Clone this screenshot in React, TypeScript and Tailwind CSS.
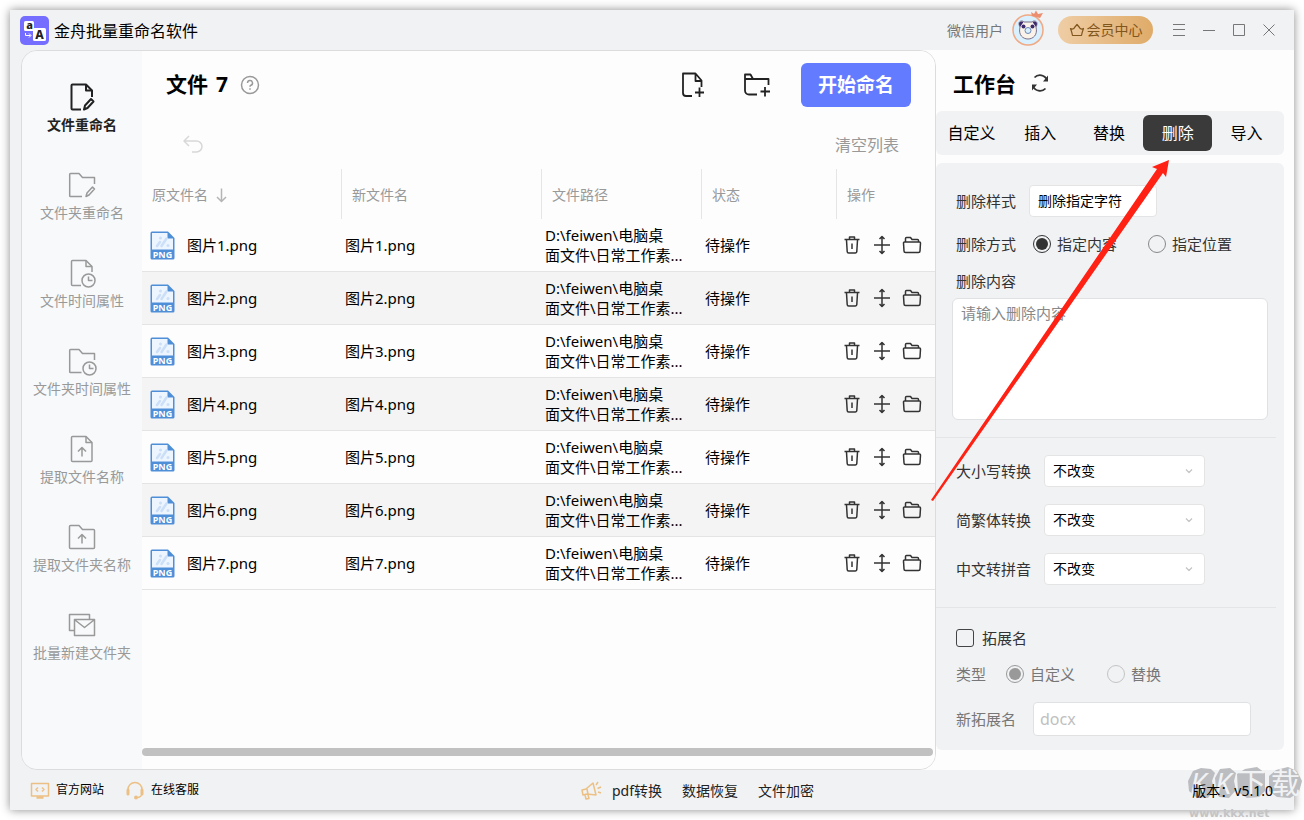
import { useState } from 'react';
import type { ReactNode } from 'react';

const files = [1, 2, 3, 4, 5, 6, 7].map((n) => `图片${n}.png`);

const tabs = ['自定义', '插入', '替换', '删除', '导入'];

const conversions = [
  { id: 'case', label: '大小写转换' },
  { id: 'hant', label: '简繁体转换' },
  { id: 'pinyin', label: '中文转拼音' },
];

interface IconProps {
  children: ReactNode;
  className?: string;
  box?: string;
}

function Icon({ children, className = 'size-8', box = '0 0 32 32' }: IconProps) {
  return (
    <svg
      viewBox={box}
      className={className}
      fill="none"
      stroke="currentColor"
      strokeWidth="1.5"
      strokeLinejoin="round"
      aria-hidden="true"
    >
      {children}
    </svg>
  );
}

const navItems: { label: string; icon: ReactNode }[] = [
  {
    label: '文件重命名',
    icon: (
      <g strokeWidth="2">
        <path d="M15 28.5H6.5a1 1 0 0 1-1-1V4.5a1 1 0 0 1 1-1H20l6 6V16" />
        <path d="M20 3.5v6h6" />
        <path d="m18 28.5 1-4 6-6.5 2.5 2.5-6 6.5z" />
      </g>
    ),
  },
  {
    label: '文件夹重命名',
    icon: (
      <>
        <path d="M16 27.5H4.5a.8.8 0 0 1-.8-.8V5.3a.8.8 0 0 1 .8-.8H13l3.500 4h12V15" />
        <path d="m20 27.500 1-3.500 5.500-6 2 2-5.500 6z" />
      </>
    ),
  },
  {
    label: '文件时间属性',
    icon: (
      <>
        <path d="M15 28.500H6.500a1 1 0 0 1-1-1V4.500a1 1 0 0 1 1-1H20l6 6V15" />
        <path d="M20 3.500v6h6" />
        <circle cx="22.500" cy="23.500" r="6.500" />
        <path d="M22.500 19.500v4h4" />
      </>
    ),
  },
  {
    label: '文件夹时间属性',
    icon: (
      <>
        <path d="M15.500 27.500h-11a.8.8 0 0 1-.8-.8V5.300a.8.8 0 0 1 .8-.8H13l3.500 4h12V15" />
        <circle cx="23.500" cy="23.500" r="6.500" />
        <path d="M23.500 19.500v4h4" />
      </>
    ),
  },
  {
    label: '提取文件名称',
    icon: (
      <>
        <path d="M6.500 3.500H20l6 6v18a1 1 0 0 1-1 1H6.500a1 1 0 0 1-1-1v-23a1 1 0 0 1 1-1z" />
        <path d="M20 3.500v6h6M16 23.500v-8M12 18.500l4-4 4 4" />
      </>
    ),
  },
  {
    label: '提取文件夹名称',
    icon: (
      <>
        <path d="M4.500 4.500H13l3.500 4h11a1 1 0 0 1 1 1v17a1 1 0 0 1-1 1h-23a1 1 0 0 1-1-1v-21a1 1 0 0 1 1-1z" />
        <path d="M16 22.500v-8M12 17.500l4-4 4 4" />
      </>
    ),
  },
  {
    label: '批量新建文件夹',
    icon: (
      <>
        <path d="M8 21.500H3.500v-16h20V10" />
        <path d="M8.500 10.500h20v16h-20zM9 11l9.500 7.500L28 11" />
      </>
    ),
  },
];

function Logo() {
  return (
    <svg viewBox="0 0 29 29" className="size-[29px]" aria-hidden="true">
      <rect width="29" height="29" rx="5" fill="#746dff" />
      <rect x="4" y="5" width="10" height="10" rx="1.500" fill="#fff" />
      <rect x="13" y="12" width="13" height="13" rx="1.500" fill="#fff" />
      <text x="9.500" y="13" fontSize="11" fontWeight="800" textAnchor="middle" fill="#222">a</text>
      <text x="19.500" y="22.500" fontSize="12" fontWeight="800" textAnchor="middle" fill="#222">A</text>
      <path d="M5.500 17v2.500h5M9 17.500l2 2-2 2" fill="none" stroke="#fff" />
    </svg>
  );
}

function Avatar() {
  return (
    <svg viewBox="0 0 34 36" className="mb-1 h-9 w-[34px]" aria-hidden="true">
      <circle cx="17" cy="20" r="15" fill="#d8f0ff" stroke="#f0a983" strokeWidth="1.500" />
      <path d="m20 2 3 2 2-3.500 2 3.500 5-1-3 5-8-2z" fill="#ec8e70" />
      <path d="M8 13.500c0-3 4-3 5-1.500h8c1-1.500 5-1.500 5 1.500 0 2-.5 2-1 3.500 2 8-3 12-8 12s-10-4-8-12c-.5-1.500-1-1.500-1-3.500z" fill="#fbf3ea" stroke="#7a6f8a" />
      <path d="M8 14c0-3 3.500-3 4.500-2L9 17zM26 14c0-3-3.500-3-4.500-2L25 17z" fill="#3d2a6d" />
      <circle cx="12.500" cy="16.500" r="2" fill="#3d2a6d" />
      <circle cx="21.500" cy="16.500" r="2" fill="#3d2a6d" />
      <circle cx="17" cy="20.500" r="3" fill="#d8f0ff" stroke="#6e87b5" />
    </svg>
  );
}

function TitleBar() {
  return (
    <header className="flex h-10 shrink-0 items-center bg-[#f1f2f4] pl-2.5 pr-[15px]">
      <Logo />
      <h1 className="ml-[5px] pt-0.5 text-base">金舟批量重命名软件</h1>
      <span className="ml-auto pt-0.5 text-sm text-[#777]">微信用户</span>
      <span className="ml-2">
        <Avatar />
      </span>
      <button type="button" className="ml-[13px] flex h-7 w-[95px] items-center justify-center gap-0.5 rounded-full bg-linear-to-r from-[#efcda5] to-[#dfab68] text-sm text-[#80561c]">
        <Icon className="size-4" box="0 0 16 16">
          <path strokeWidth="1.200" d="M3.500 13.500c-.5-2.500-1-4.500-2-7C3 7.500 5 7 5.500 5.500L8 2.500l2.500 3c.5 1.500 2.500 2 4 1-1 2.500-1.500 4.500-2 7z" />
        </Icon>
        会员中心
      </button>
      <div className="ml-4 flex gap-2.5 text-[#777]">
        <button type="button" aria-label="菜单">
          <Icon className="size-5" box="0 0 20 20"><path strokeWidth="1" d="M4 4.500h12M4 9.500h12M4 15.500h12" /></Icon>
        </button>
        <button type="button" aria-label="最小化">
          <Icon className="size-5" box="0 0 20 20"><path strokeWidth="1" d="M4 10.500h12" /></Icon>
        </button>
        <button type="button" aria-label="最大化">
          <Icon className="size-5" box="0 0 20 20"><path strokeWidth="1" d="M4.500 4.500h11v11h-11z" /></Icon>
        </button>
        <button type="button" aria-label="关闭">
          <Icon className="size-5" box="0 0 20 20"><path strokeWidth="1" d="m4.500 4.500 11 11M15.500 4.500l-11 11" /></Icon>
        </button>
      </div>
    </header>
  );
}

function Sidebar() {
  return (
    <nav className="w-[120px] shrink-0 bg-[#f7f9fb] pt-[30px]">
      {navItems.map((item, i) => (
        <button
          key={item.label}
          type="button"
          className={`flex h-[88px] w-full flex-col items-center gap-0.5 text-sm leading-5 whitespace-nowrap ${
            i === 0 ? 'font-bold text-[#222]' : 'text-[#999]'
          }`}
        >
          <Icon>{item.icon}</Icon>
          {item.label}
        </button>
      ))}
    </nav>
  );
}

function PngIcon() {
  return (
    <svg viewBox="0 0 25 29" className="h-[29px] w-[25px] shrink-0" aria-hidden="true">
      <path d="M2 .5h16l6.500 6.500v20a1.500 1.500 0 0 1-1.500 1.500H2A1.500 1.500 0 0 1 .5 27V2A1.500 1.500 0 0 1 2 .5z" fill="#4e8fd8" />
      <path d="M2 2h15.500v5.500H23V18.500H2z" fill="#edf5fe" />
      <path d="m7 15 3-4M11.500 15l5-7.500" stroke="#cbdff8" strokeWidth="2.500" strokeLinecap="round" />
      <circle cx="10.500" cy="7" r="1.500" fill="#cbdff8" />
      <circle cx="18" cy="14.500" r="1.500" fill="#cbdff8" />
      <text x="12.500" y="26.500" textAnchor="middle" fontSize="9" fontWeight="700" fill="#fff">PNG</text>
    </svg>
  );
}

function RowActions() {
  return (
    <div className="flex gap-2.5 text-[#333]">
      <button type="button" aria-label="删除">
        <Icon className="size-5" box="0 0 20 20">
          <path d="M2.500 4.500h15M7.500 4V2h5v2M4.500 5l.7 11.500a1.500 1.500 0 0 0 1.500 1.500h6.600a1.500 1.500 0 0 0 1.500-1.500L15.500 5M10 8.500v5.500" />
        </Icon>
      </button>
      <button type="button" aria-label="移动">
        <Icon className="size-5" box="0 0 20 20">
          <path d="M2 10h16M10 2v16M7.500 4 10 1.500 12.500 4M7.500 16l2.500 2.500 2.500-2.500" />
        </Icon>
      </button>
      <button type="button" aria-label="打开文件夹">
        <Icon className="size-5" box="0 0 20 20">
          <path d="M3.500 7V3.500a1 1 0 0 1 1-1h4l1.500 2h5.500a1 1 0 0 1 1 1V7M2.500 7h15a1 1 0 0 1 1 1l-.5 8a1.500 1.500 0 0 1-1.500 1.500h-13A1.500 1.500 0 0 1 2 16l-.5-8a1 1 0 0 1 1-1z" />
        </Icon>
      </button>
    </div>
  );
}

function FileTable() {
  return (
    <table className="w-full table-fixed border-separate border-spacing-0 text-left text-[15px]">
      <colgroup>
        <col className="w-[200px]" />
        <col className="w-[200px]" />
        <col className="w-[160px]" />
        <col className="w-[135px]" />
        <col />
      </colgroup>
      <thead>
        <tr className="h-[50px] text-sm text-[#999] [&>th]:pt-0.5 [&>th]:pl-2.5 [&>th]:font-normal">
          <th scope="col" className="border-r border-[#e5e5e5]">
            <span className="flex items-center gap-1.5">
              原文件名
              <Icon className="size-4 text-[#b5b5b5]" box="0 0 16 16">
                <path d="M7.500 1.500v13M3 10l4.500 4.500L12 10" />
              </Icon>
            </span>
          </th>
          <th scope="col" className="border-r border-[#e5e5e5]">新文件名</th>
          <th scope="col" className="border-r border-[#e5e5e5]">文件路径</th>
          <th scope="col" className="border-r border-[#e5e5e5]">状态</th>
          <th scope="col">操作</th>
        </tr>
      </thead>
      <tbody>
        {files.map((name) => (
          <tr key={name} className="h-[53px] even:bg-[#f4f4f4] [&>td]:border-b [&>td]:border-[#e4e4e4]">
            <td className="pl-2">
              <span className="flex items-center gap-3">
                <PngIcon />
                {name}
              </span>
            </td>
            <td className="pl-[3px]">{name}</td>
            <td className="pl-[3px] leading-5 whitespace-nowrap">
              D:\feiwen\电脑桌
              <br />
              面文件\日常工作素...
            </td>
            <td className="pl-[3px]">待操作</td>
            <td className="pl-[5px]">
              <RowActions />
            </td>
          </tr>
        ))}
      </tbody>
    </table>
  );
}

function FilePanel() {
  return (
    <main className="flex min-w-0 flex-1 flex-col bg-[#fdfdfd] pt-3">
      <div className="flex h-11 items-center pl-6 pr-6">
        <h2 className="flex gap-2 text-[21px] font-bold">
          文件 <span>7</span>
        </h2>
        <button type="button" aria-label="帮助" className="ml-3 text-[#999]">
          <Icon className="size-5" box="0 0 20 20">
            <circle cx="10" cy="10" r="8.500" />
            <path d="M7.500 8a2.500 2.500 0 1 1 3.500 2.300c-.7.300-1 .7-1 1.400M10 13.200v1.600" />
          </Icon>
        </button>
        <button type="button" aria-label="添加文件" className="ml-auto text-[#222]">
          <Icon className="size-8">
            <path strokeWidth="1.800" d="M15 27H9a3 3 0 0 1-3-3V4.500h12.500l6 7V18M18.500 4.500V12h6M22.500 18.500V28M18 23.500h9" />
          </Icon>
        </button>
        <button type="button" aria-label="添加文件夹" className="ml-8 text-[#222]">
          <Icon className="size-8">
            <path strokeWidth="1.800" d="M16 25.500H8a4 4 0 0 1-4-4V5.500h5.500L12 10h15.500v6M4 10h8M24 18v9.500M19.500 22.500H29" />
          </Icon>
        </button>
        <button type="button" className="ml-7 h-11 w-[110px] rounded-md bg-[#637bff] text-[19px] font-bold text-white">
          开始命名
        </button>
      </div>
      <div className="flex h-[62px] items-center justify-between pt-3.5 pr-9 pl-10">
        <button type="button" aria-label="撤销" className="text-[#d8d8d8]">
          <Icon className="size-[22px]" box="0 0 22 22">
            <path d="M7 2 2 7l5 5M2 7h12.500a5 5 0 0 1 0 11H10" />
          </Icon>
        </button>
        <button type="button" className="text-base text-[#999]">清空列表</button>
      </div>
      <FileTable />
      <div className="mt-auto mr-0.5 mb-[13px] h-2 rounded-full bg-[#c1c1c1]" />
    </main>
  );
}

interface RadioProps {
  name: string;
  label: string;
  checked?: boolean;
  muted?: boolean;
}

function Radio({ name, label, checked = false, muted = false }: RadioProps) {
  return (
    <label className="flex items-center gap-1.5">
      <input
        type="radio"
        name={name}
        defaultChecked={checked}
        disabled={muted}
        className="grid size-[18px] appearance-none place-content-center rounded-full border border-[#888] before:size-3 before:rounded-full before:content-[''] checked:border-[#333] checked:before:bg-[#333] disabled:border-[#c4c4c4] disabled:checked:border-[#999] disabled:checked:before:bg-[#999]"
      />
      {label}
    </label>
  );
}

function Select({ id, value, width }: { id: string; value: string; width: string }) {
  return (
    <div className={`relative ${width}`}>
      <select
        id={id}
        className="h-8 w-full appearance-none rounded border border-[#e4e4e4] bg-white pl-2 text-sm text-black"
      >
        <option>{value}</option>
      </select>
      <Icon className="pointer-events-none absolute top-3 right-3 size-2" box="0 0 8 8">
        <path stroke="#c4c4c4" strokeWidth="1.200" d="m1 2.500 3 3 3-3" />
      </Icon>
    </div>
  );
}

function Workbench() {
  const [active, setActive] = useState('删除');

  return (
    <aside className="w-[358px] shrink-0 bg-[#fdfdfd] pr-2.5">
      <div className="flex h-[61px] items-center gap-3.5 pt-2 pl-[17px]">
        <h2 className="text-[21px] font-bold">工作台</h2>
        <button type="button" aria-label="刷新" className="pb-1 text-[#333]">
          <Icon className="size-5" box="0 0 20 20">
            <path strokeWidth="1.800" d="M4.500 4.500A7.500 7.500 0 0 1 17 7M15.500 15.500A7.500 7.500 0 0 1 3 13" />
            <path d="M18 2.500v6h-5zM2 17.500v-6h5z" fill="currentColor" stroke="none" />
          </Icon>
        </button>
      </div>
      <div role="tablist" className="grid h-11 grid-cols-5 rounded-md bg-[#f1f2f4] py-1 pr-[3px] pl-px">
        {tabs.map((tab) => (
          <button
            key={tab}
            type="button"
            role="tab"
            aria-selected={tab === active}
            onClick={() => setActive(tab)}
            className={`rounded-md text-base ${tab === active ? 'bg-[#3a3a3a] text-white' : ''}`}
          >
            {tab}
          </button>
        ))}
      </div>

      <form className="mt-2 rounded-md bg-[#f1f2f4] text-[15px] leading-6 text-[#333]">
        <div className="mr-2 border-b border-[#e4e5e7] pt-[22px] pr-2 pb-[17px] pl-4">
          <div className="flex items-center gap-[13px] pl-1">
            <label htmlFor="style">删除样式</label>
            <Select id="style" value="删除指定字符" width="w-32" />
          </div>
          <div className="mt-[15px] flex h-6 items-center pl-1">
            <span className="mr-[17px]">删除方式</span>
            <Radio name="mode" label="指定内容" checked />
            <span className="w-[31px]" />
            <Radio name="mode" label="指定位置" />
          </div>
          <label htmlFor="content" className="mt-[13px] block h-6 pl-1">删除内容</label>
          <textarea
            id="content"
            placeholder="请输入删除内容"
            className="mt-[5px] block h-[122px] w-full resize-none rounded-md border border-[#e0e1e3] bg-white px-2 py-0.5 placeholder:text-[#888]"
          />
        </div>

        <div className="mr-2 flex flex-col gap-[17px] border-b border-[#e4e5e7] pt-[17px] pb-[22px] pl-5">
          {conversions.map((c) => (
            <div key={c.id} className="flex items-center gap-[13px]">
              <label htmlFor={c.id}>{c.label}</label>
              <Select id={c.id} value="不改变" width="w-[161px]" />
            </div>
          ))}
        </div>

        <div className="pt-[18px] pb-3.5 pl-5">
          <label className="flex h-6 w-fit items-center gap-2">
            <input
              type="checkbox"
              className="size-[18px] appearance-none rounded-[3px] border border-[#444] checked:bg-[#333]"
            />
            拓展名
          </label>
          <div className="mt-3 flex h-6 items-center text-[#777]">
            <span className="mr-5">类型</span>
            <Radio name="ext" label="自定义" checked muted />
            <span className="w-8" />
            <Radio name="ext" label="替换" muted />
          </div>
          <div className="mt-4 flex items-center gap-[17px] text-[#777]">
            <label htmlFor="ext-name">新拓展名</label>
            <input
              id="ext-name"
              type="text"
              placeholder="docx"
              className="h-[34px] w-[218px] rounded border border-[#e0e1e3] bg-white px-1.5 text-base placeholder:text-[#c0c0c0]"
            />
          </div>
        </div>
      </form>
    </aside>
  );
}

function Footer() {
  return (
    <footer className="grid h-10 shrink-0 grid-cols-[570px_1fr_auto] items-center bg-[#f1f2f4] pr-[21px]">
      <div className="flex items-center pl-5 text-xs">
        <a href="#site" className="flex items-center gap-1.5">
          <Icon className="size-5 text-[#ecc084]" box="0 0 20 20">
            <path d="M1.500 3.500h17v12.500h-17zM8 7.500l-2 2 2 2M12 7.500l2 2-2 2" />
            <path d="M6.500 17.500h7" strokeWidth="2.500" />
          </Icon>
          官方网站
        </a>
        <a href="#service" className="ml-[21px] flex items-center gap-1.5">
          <Icon className="size-5 text-[#ecc084]" box="0 0 20 20">
            <path d="M3 9.500a7 7 0 1 1 14 0M17 13c0 3-2.500 4.500-5 4.500" />
            <path d="M3 10v4M17 10v4" strokeWidth="3" strokeLinecap="round" />
            <circle cx="11" cy="17.500" r="1.200" fill="currentColor" />
          </Icon>
          在线客服
        </a>
      </div>
      <div className="flex items-center pt-0.5 text-sm text-[#222]">
        <Icon className="mr-2.5 size-[22px] text-[#ecc084]" box="0 0 22 22">
          <path d="m2 10 4-1 7-6 3 12-9-1-4 1zM5 15l1 4 3-.5-1-4M7 9l1 5M16 5l2-3M17.500 8.500 21 7M18 12l3 1" />
        </Icon>
        <a href="#pdf">pdf转换</a>
        <a href="#recover" className="ml-5">数据恢复</a>
        <a href="#encrypt" className="ml-5">文件加密</a>
      </div>
      <span className="relative z-10 pt-0.5 text-sm">版本：v5.1.0</span>
    </footer>
  );
}

function Watermark() {
  return (
    <svg viewBox="0 0 120 56" className="pointer-events-none absolute right-0 bottom-0 h-14 w-[120px]" aria-hidden="true">
      <g fill="#bcbdc0">
        <path d="m4 17 5-10 8-3 10 1 4 4-3 8 2 9-6 8-12-1-7-6z" />
        <path d="m31 14 5-9 10-1 6 5-2 8 2 9-7 8-10-1-3-8z" />
        <path d="m53 10 8-5 12-2 8 6v18l-6 6-12 1-9-6z" />
        <path d="m85 12 7-6 12-3 9 4 5 10-3 11-9 6-13-1-8-6z" />
      </g>
      <g fontSize="29" fill="#f1f2f4">
        <text x="6" y="30" fontStyle="italic">K</text>
        <text x="31" y="30" fontStyle="italic">K</text>
        <text x="53" y="30">下</text>
        <text x="87" y="30">载</text>
      </g>
      <text x="5" y="53" fontSize="11" fontWeight="700" fill="#c4c4c6" className="font-['DejaVu_Sans',sans-serif]">www.kkx.net</text>
    </svg>
  );
}

export default function App() {
  return (
    <div className="relative flex min-h-screen overflow-hidden bg-white p-2.5 font-['Noto_Sans','Noto_Sans_CJK_SC',sans-serif] text-black">
      <div className="flex min-w-0 flex-1 flex-col shadow-[0_0_9px_rgba(0,0,0,0.45)]">
        <TitleBar />
        <div className="flex flex-1 bg-[linear-gradient(to_right,#f1f2f4_50%,#fdfdfd_50%)] pl-[11px]">
          <div className="flex min-w-0 flex-1 overflow-hidden rounded-2xl border border-[#dcdcdc]">
            <Sidebar />
            <FilePanel />
          </div>
          <Workbench />
        </div>
        <Footer />
      </div>
      <Watermark />
      {/* pointer drawn from the file list to the active tab */}
      <svg viewBox="0 0 240 342" className="pointer-events-none absolute top-[159px] right-[134px] h-[342px] w-60" aria-hidden="true">
        <path d="M1 341 227 10l-5-2 17-7-3 17-3-4L3 342z" fill="#ff2113" />
      </svg>
    </div>
  );
}
